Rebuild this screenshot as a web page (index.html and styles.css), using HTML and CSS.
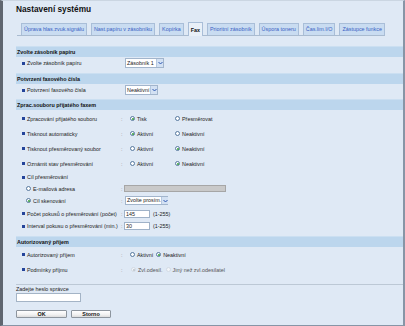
FILE: index.html
```html
<!DOCTYPE html>
<html>
  <head>
    <meta charset='UTF-8'>
    <title>Nastavení systému</title>
    <link rel="stylesheet" href="styles.css">
  </head>
  <body>
    <div class='frame'>
      <h1 class='title'>Nastavení systému</h1>

      <div class='tabs'>
        <div class='tab'>Úprava hlas.zvuk.signálu</div>
        <div class='tab'>Nast.papíru v zásobníku</div>
        <div class='tab'>Kopírka</div>
        <div class='tab tab--active'>Fax</div>
        <div class='tab'>Prioritní zásobník</div>
        <div class='tab'>Úspora toneru</div>
        <div class='tab'>Čas.lim.I/O</div>
        <div class='tab'>Zástupce funkce</div>
      </div>

      <div class='section section--tray'>
        <div class='section__head'>Zvolte zásobník papíru</div>
        <div class='row row--tray'>
          <span class='bullet'></span><span class='lbl'>Zvolte zásobník papíru</span><span class='colon'></span>
          <span class='sel sel--tray'><span class='sel__text'>Zásobník 1</span><span class='sel__btn'><svg width='5' height='4' viewBox='0 0 5 4'><path d='M0.5 1 L2.5 3 L4.5 1' fill='none' stroke='#2d56b0' stroke-width='1'/></svg></span></span>
        </div>
      </div>

      <div class='section section--confirm'>
        <div class='section__head'>Potvrzení faxového čísla</div>
        <div class='row row--tray'>
          <span class='bullet'></span><span class='lbl'>Potvrzení faxového čísla</span><span class='colon'></span>
          <span class='sel sel--confirm'><span class='sel__text'>Neaktivní</span><span class='sel__btn'><svg width='5' height='4' viewBox='0 0 5 4'><path d='M0.5 1 L2.5 3 L4.5 1' fill='none' stroke='#2d56b0' stroke-width='1'/></svg></span></span>
        </div>
      </div>

      <div class='section section--process'>
        <div class='section__head'>Zprac.souboru přijatého faxem</div>
        <div class='row'>
          <span class='bullet'></span><span class='lbl'>Zpracování přijatého souboru</span><span class='colon'>:</span>
          <span class='opts'>
            <span class='opt opt--wide'><span class='radio radio--on'></span>Tisk</span>
            <span class='opt'><span class='radio'></span>Přesměrovat</span>
          </span>
        </div>
        <div class='row'>
          <span class='bullet'></span><span class='lbl'>Tisknout automaticky</span><span class='colon'>:</span>
          <span class='opts'>
            <span class='opt opt--wide'><span class='radio radio--on'></span>Aktivní</span>
            <span class='opt'><span class='radio'></span>Neaktivní</span>
          </span>
        </div>
        <div class='row'>
          <span class='bullet'></span><span class='lbl'>Tisknout přesměrovaný soubor</span><span class='colon'>:</span>
          <span class='opts'>
            <span class='opt opt--wide'><span class='radio'></span>Aktivní</span>
            <span class='opt'><span class='radio radio--on'></span>Neaktivní</span>
          </span>
        </div>
        <div class='row'>
          <span class='bullet'></span><span class='lbl'>Oznámit stav přesměrování</span><span class='colon'>:</span>
          <span class='opts'>
            <span class='opt opt--wide'><span class='radio'></span>Aktivní</span>
            <span class='opt'><span class='radio radio--on'></span>Neaktivní</span>
          </span>
        </div>
        <div class='row row--dest'>
          <span class='bullet'></span><span class='lbl'>Cíl přesměrování</span>
        </div>
        <div class='row row--sub row--mail'>
          <span class='radio'></span><span class='lbl lbl--sub'>E-mailová adresa</span><span class='colon colon--tight'>:</span>
          <input class='field field--mail' type='text' disabled>
        </div>
        <div class='row row--sub row--scan'>
          <span class='radio radio--on'></span><span class='lbl lbl--sub'>Cíl skenování</span><span class='colon colon--tight'>:</span>
          <span class='sel sel--scan'><span class='sel__text'>Zvolte prosím.</span><span class='sel__btn'><svg width='5' height='4' viewBox='0 0 5 4'><path d='M0.5 1 L2.5 3 L4.5 1' fill='none' stroke='#2d56b0' stroke-width='1'/></svg></span></span>
        </div>
        <div class='row row--num'>
          <span class='bullet'></span><span class='lbl'>Počet pokusů o přesměrování (počet)</span><span class='colon colon--tight'>:</span>
          <input class='field field--num' type='text' value='145'><span class='range'>(1-255)</span>
        </div>
        <div class='row row--num row--last'>
          <span class='bullet'></span><span class='lbl'>Interval pokusu o přesměrování (min.)</span><span class='colon colon--tight'>:</span>
          <input class='field field--num' type='text' value='30'><span class='range'>(1-255)</span>
        </div>
      </div>

      <div class='section section--auth'>
        <div class='section__head'>Autorizovaný příjem</div>
        <div class='row'>
          <span class='bullet'></span><span class='lbl'>Autorizovaný příjem</span><span class='colon'>:</span>
          <span class='opts'>
            <span class='opt'><span class='radio'></span>Aktivní</span>
            <span class='opt'><span class='radio radio--on'></span>Neaktivní</span>
          </span>
        </div>
        <div class='row'>
          <span class='bullet'></span><span class='lbl'>Podmínky příjmu</span><span class='colon'>:</span>
          <span class='opts opts--off'>
            <span class='opt'><span class='radio radio--off radio--dot'></span>Zvl.odesíl.</span>
            <span class='opt'><span class='radio radio--off'></span>Jiný než zvl.odesílatel</span>
          </span>
        </div>
      </div>

      <div class='login'>
        <div class='login__label'>Zadejte heslo správce</div>
        <input class='field field--pass' type='password'>
        <div class='btns'>
          <div class='btn btn--ok'>OK</div>
          <div class='btn btn--cancel'>Storno</div>
        </div>
      </div>
    </div>
  </body>
</html>
```

FILE: styles.css
```css
html,
body {
	margin: 0;
}

body {
	width: 405px;
	height: 326px;
	overflow: hidden;
	background: #dfe9f5;
	font-family: 'Liberation Sans', Arial, sans-serif;
	font-size: 5.4px;
	color: #222;
}

.frame {
	box-sizing: border-box;
	height: 326px;
	padding-left: 13px;
	border-top: 1px solid #cbd6e2;
	border-left: 3px solid #5f6670;
	border-right: 2px solid #8795a6;
	border-bottom: 1px solid #8795a6;
}

  .title {
  	margin: 0;
  	padding-top: 2px;
  	height: 12px;
  	font-size: 8.3px;
  	line-height: 12px;
  	font-weight: bold;
  	color: #111;
  }

  .tabs {
  	display: flex;
  	align-items: flex-end;
  	gap: 4px;
  	width: 364px;
  	height: 14px;
  	margin: 6px 0 0 1px;
  	padding-left: 4px;
  	border-bottom: 1px solid #a9bbd0;
  }

    .tab {
    	box-sizing: border-box;
    	height: 12px;
    	padding: 0 2px;
    	line-height: 11px;
    	color: #3a5fc4;
    	background: #c9dcf1;
    	border: 1px solid #a9bed8;
    	border-bottom: none;
    	white-space: nowrap;
    }

    .tab--active {
    	height: 14px;
    	line-height: 14px;
    	margin-bottom: -1px;
    	font-weight: bold;
    	color: #111;
    	background: #e9f0f8;
    }

  .section {
  	margin-top: 10px;
  }

  .section + .section {
  	margin-top: 0;
  }

  .section--tray {
  	padding-bottom: 4px;
  }

  .section--confirm {
  	padding-bottom: 3px;
  }

  .section--process {
  	padding-bottom: 4px;
  }

  .section--auth {
  	padding-bottom: 7px;
  }

    .section__head {
    	height: 11px;
    	padding-left: 1px;
    	line-height: 11px;
    	font-weight: bold;
    	color: #111;
    	background: #bcd6ed;
    	border-top: 1px solid #cbdff1;
    	box-sizing: border-box;
    }

    .section--process .section__head {
    	margin-bottom: 1px;
    }

    .row {
    	display: flex;
    	align-items: center;
    	height: 15px;
    	padding-left: 6px;
    }

    .row--tray {
    	height: 12px;
    }

    .row--dest {
    	height: 12px;
    }

    .row--sub {
    	padding-left: 10px;
    }

    .row--mail {
    	height: 11px;
    }

    .row--scan {
    	height: 13px;
    }

    .row--num {
    	height: 13px;
    }

    .row--last {
    	height: 12px;
    }

      .bullet {
      	width: 3px;
      	height: 3px;
      	margin-right: 2px;
      	background: #24449a;
      	flex: none;
      }

      .lbl {
      	width: 94px;
      	flex: none;
      	white-space: nowrap;
      }

      .lbl--sub {
      	width: 88px;
      	margin-left: 2px;
      }

      .colon {
      	width: 3px;
      	flex: none;
      	color: #888;
      }

      .colon--tight {
      	width: 2px;
      	margin-right: 1px;
      }

      .opts {
      	display: flex;
      	align-items: center;
      	gap: 3px;
      	margin-left: 6px;
      }

      .opts--off {
      	margin-left: 7px;
      	color: #555;
      }

        .opt {
        	display: flex;
        	align-items: center;
        	gap: 2px;
        	white-space: nowrap;
        }

        .opt--wide {
        	width: 42px;
        }

      .radio {
      	position: relative;
      	box-sizing: border-box;
      	width: 5px;
      	height: 5px;
      	flex: none;
      	border: 1px solid #56789e;
      	border-radius: 50%;
      	background: #fff;
      }

      .radio--on::after {
      	content: '';
      	position: absolute;
      	top: 0.5px;
      	left: 0.5px;
      	width: 2px;
      	height: 2px;
      	border-radius: 50%;
      	background: #2f9a37;
      }

      .radio--off {
      	border-color: #d2dae4;
      	background: #f2f5f9;
      }

      .radio--dot::after {
      	content: '';
      	position: absolute;
      	top: 0.5px;
      	left: 0.5px;
      	width: 2px;
      	height: 2px;
      	border-radius: 50%;
      	background: #b8c0c8;
      }

      .sel {
      	display: flex;
      	justify-content: space-between;
      	box-sizing: border-box;
      	height: 10px;
      	border: 1px solid #a2b5cc;
      	background: #fff;
      	margin-left: 1px;
      }

      .sel--tray {
      	width: 39px;
      }

      .sel--confirm {
      	width: 33px;
      }

      .sel--scan {
      	width: 43px;
      	height: 9px;
      }

        .sel__text {
        	flex: none;
        	padding-left: 1px;
        	line-height: 8px;
        	white-space: nowrap;
        }

        .sel--scan .sel__text {
        	line-height: 7px;
        }

        .sel__btn {
        	display: flex;
        	align-items: center;
        	justify-content: center;
        	flex: none;
        	width: 6px;
        	background: #d3e1f3;
        	border-left: 1px solid #b5c8e0;
        }

      .field {
      	box-sizing: border-box;
      	margin: 0;
      	padding: 0 1px;
      	font-family: inherit;
      	font-size: 5.4px;
      	color: #222;
      	background: #fff;
      	border: 1px solid #9fb2c8;
      	outline: none;
      }

      .field--mail {
      	width: 102px;
      	height: 7px;
      	background: #c9c9c9;
      	border-color: #a6a6a6;
      }

      .field--num {
      	width: 26px;
      	height: 8px;
      }

      .range {
      	margin-left: 3px;
      }

  .login {
  	border-top: 1px solid #bcc8d5;
  }

    .login__label {
    	height: 8px;
    	line-height: 9px;
    }

    .field--pass {
    	display: block;
    	width: 65px;
    	height: 9px;
    	border-color: #a4b4c6;
    }

    .btns {
    	display: flex;
    	gap: 4px;
    	margin-top: 8px;
    }

      .btn {
      	box-sizing: border-box;
      	height: 8px;
      	line-height: 7px;
      	text-align: center;
      	font-weight: bold;
      	color: #111;
      	background: linear-gradient(to bottom, #fff 0%, #f1f1f1 60%, #dcdcdc 100%);
      	border: 1px solid #8d959e;
      	border-radius: 1px;
      }

      .btn--ok {
      	width: 51px;
      }

      .btn--cancel {
      	width: 40px;
      }
```
